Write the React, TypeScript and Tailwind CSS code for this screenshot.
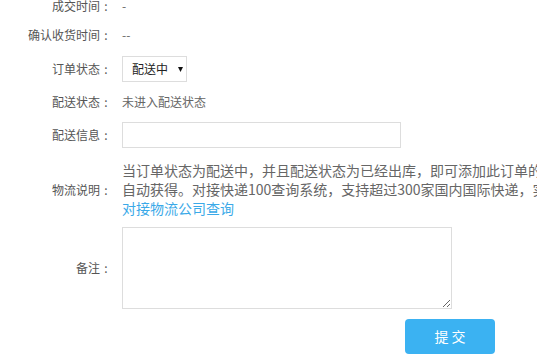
export default function App() {
  const font = { fontFamily: '"Noto Sans CJK SC", "Microsoft YaHei", sans-serif' };

  const Label = ({ text }: { text: string }) => (
    <span className="flex w-[112px] shrink-0 justify-end text-[#555]">
      <span>{text}</span>
      <span className="w-[12px] text-center">:</span>
    </span>
  );

  return (
    <div className="w-[537px] h-[357px] overflow-hidden bg-white text-[12px] text-[#666]" style={font}>
      <div className="-mt-[7px] flex flex-col">
        {/* 成交时间 */}
        <div className="flex h-[26px] items-center mb-[3px]">
          <Label text="成交时间" />
          <span className="ml-[10px]">-</span>
        </div>

        {/* 确认收货时间 */}
        <div className="flex h-[26px] items-center mb-[8px]">
          <Label text="确认收货时间" />
          <span className="ml-[10px]">--</span>
        </div>

        {/* 订单状态 */}
        <div className="flex h-[26px] items-center mb-[7px]">
          <Label text="订单状态" />
          <div className="ml-[10px] flex h-[26px] w-[65px] items-center border border-[#ddd] pl-[9px] text-[#222]">
            <span>配送中</span>
            <svg className="ml-[10px]" width="5" height="5" viewBox="0 0 5 5">
              <path d="M0 0h5L2.5 5z" fill="#111" />
            </svg>
          </div>
        </div>

        {/* 配送状态 */}
        <div className="flex h-[26px] items-center mb-[7px]">
          <Label text="配送状态" />
          <span className="ml-[10px]">未进入配送状态</span>
        </div>

        {/* 配送信息 */}
        <div className="flex h-[26px] items-center mb-[13px]">
          <Label text="配送信息" />
          <input className="ml-[10px] h-[26px] w-[279px] border border-[#ddd] px-2 outline-none" />
        </div>

        {/* 物流说明 */}
        <div className="flex items-center mb-[9px]">
          <Label text="物流说明" />
          <div className="ml-[10px] whitespace-nowrap text-[14px] leading-[19px] text-[#666]">
            <p>当订单状态为配送中，并且配送状态为已经出库，即可添加此订单的物流信息，物流跟踪信息将</p>
            <p>自动获得。对接快递100查询系统，支持超过300家国内国际快递，实时查询物流信息。</p>
            <a href="#" className="text-[#3aa9e8]">对接物流公司查询</a>
          </div>
        </div>

        {/* 备注 */}
        <div className="flex items-center mb-[10px]">
          <Label text="备注" />
          <textarea className="ml-[10px] h-[82px] w-[330px] border border-[#ddd] p-2 outline-none" />
        </div>

        {/* 提交 */}
        <div className="flex">
          <button className="ml-[405px] h-[35px] w-[90px] rounded-[4px] bg-[#3bb2f2] text-[14px] text-white">
            提 交
          </button>
        </div>
      </div>
    </div>
  );
}
